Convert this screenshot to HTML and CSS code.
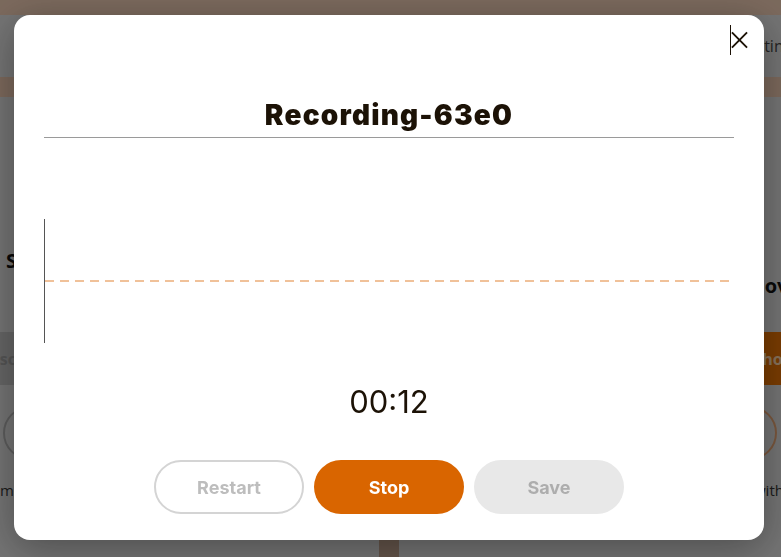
FILE: index.html
```html
<!DOCTYPE html>
<html lang="en">
<head>
    <meta charset="UTF-8">
    <meta name="viewport" content="width=device-width, initial-scale=1.0">
    <link rel="stylesheet" href="styles.css">
    <title>Recorder</title>
</head>
<body>
    <div class="topline"></div>
    <header class="header">
        <span class="logo">Recorder</span>
        <nav class="nav">Settings</nav>
    </header>
    <div class="tabbar"></div>

    <main class="columns">
        <section class="column column-left">
            <h3>Saved clips</h3>
            <button class="btn-muted">Discover</button>
            <div class="circle"></div>
            <p>manage your recordings</p>
        </section>
        <div class="divider"></div>
        <section class="column column-right">
            <h3>Remove noise</h3>
            <button class="btn-orange">Choose</button>
            <div class="circle circle-orange"></div>
            <p>with your microphone</p>
        </section>
    </main>

    <!-- 录音弹窗 -->
    <div class="overlay">
        <div class="modal">
            <button class="btn-close" aria-label="Close">
                <svg width="18" height="18" viewBox="0 0 18 18">
                    <path d="M1 1 L17 17 M17 1 L1 17" stroke="#1c1206" stroke-width="2" fill="none"/>
                </svg>
            </button>
            <h2 class="modal-title">Recording-63e0</h2>
            <div class="wave">
                <svg width="684" height="124" viewBox="0 0 684 124">
                    <line x1="0" y1="62" x2="684" y2="62" stroke="#f0c199" stroke-width="2" stroke-dasharray="9 6"/>
                </svg>
            </div>
            <div class="timer">00:12</div>
            <div class="actions">
                <button class="btn btn-restart">Restart</button>
                <button class="btn btn-stop">Stop</button>
                <button class="btn btn-save">Save</button>
            </div>
        </div>
    </div>
</body>
</html>
```

FILE: styles.css
```css
body {
    margin: 0;
    background-color: #d6d6d6;
    font-family: "Open Sans", "Liberation Sans", sans-serif;
    color: #222;
    height: 557px;
    overflow: hidden;
}
.topline {
    height: 15px;
    background-color: #e4c3ac;
}
.header {
    height: 62px;
    display: flex;
    align-items: center;
    justify-content: space-between;
    padding: 0 0 0 30px;
    font-size: 16px;
    color: #333;
}
.nav {
    margin-right: -19px;
    color: #444;
}
.tabbar {
    height: 20px;
    background-color: #e4c1a9;
}
.columns {
    display: grid;
    grid-template-columns: 379px 20px 1fr;
    height: 460px;
}
.divider {
    background-color: #b99c89;
}
.column {
    display: flex;
    flex-direction: column;
    align-items: flex-start;
    padding-top: 150px;
    white-space: nowrap;
}
.column h3 {
    margin: 0 0 58px;
    font-size: 20px;
    font-weight: 700;
    color: #111;
}
.column p {
    margin: 20px 0 0;
    font-size: 15px;
    color: #333;
}
.btn-muted, .btn-orange {
    height: 53px;
    border: none;
    width: 200px;
    padding: 0 0 0 4px;
    text-align: left;
    font-family: inherit;
    font-size: 16px;
    font-weight: 700;
}
.btn-muted {
    background-color: #bababa;
    color: #9c9c9c;
}
.btn-orange {
    background-color: #e06f04;
    color: #f7d2a8;
}
.circle {
    width: 50px;
    height: 50px;
    border-radius: 50%;
    border: 2px solid #aaa;
    margin-top: 21px;
}
.circle-orange {
    border-color: #e0a070;
}

/* 左右两栏只露出边缘 */
.column-left h3 { margin-left: 6px; }
.column-left .btn-muted { margin-left: -21px; }
.column-left .circle { margin-left: 3px; }
.column-left p { margin-left: 0; }
.column-right h3 { margin: 25px 0 33px 321px; }
.column-right .btn-orange { margin-left: 349px; }
.column-right .circle { margin-left: 324px; }
.column-right p { margin-left: 355px; }

/* 遮罩层 */
.overlay {
    position: fixed;
    inset: 0;
    background-color: rgba(0, 0, 0, 0.46);
    display: flex;
    align-items: flex-start;
    padding: 15px 0 0 14px;
}
.modal {
    position: relative;
    width: 750px;
    height: 525px;
    box-sizing: border-box;
    padding: 0 30px;
    background-color: #fff;
    border-radius: 16px;
    box-shadow: 0 8px 40px rgba(0, 0, 0, 0.35);
    font-family: Inter, "Noto Sans", sans-serif;
    color: #1c1206;
    display: flex;
    flex-direction: column;
}
.btn-close {
    position: absolute;
    top: 10px;
    right: 14px;
    width: 20px;
    height: 30px;
    padding: 0 2px 0 0;
    border: none;
    border-left: 1px solid #1c1206;
    background: none;
    display: flex;
    align-items: center;
    justify-content: center;
}
.modal-title {
    margin: 84px 0 0;
    padding-bottom: 5px;
    font-size: 28px;
    line-height: 33px;
    font-weight: 900;
    letter-spacing: 1.2px;
    text-align: center;
    border-bottom: 1px solid #9a9a9a;
}
.wave {
    margin-top: 81px;
    height: 124px;
    border-left: 1px solid #555;
    display: flex;
}
.wave svg {
    display: block;
}
.timer {
    margin-top: 40px;
    font-size: 31px;
    line-height: 37px;
    text-align: center;
}
.actions {
    margin-top: 40px;
    display: flex;
    justify-content: center;
    gap: 10px;
}
.btn {
    width: 150px;
    height: 54px;
    border-radius: 27px;
    font-family: Inter, "Noto Sans", sans-serif;
    font-size: 18px;
    font-weight: 700;
    border: none;
}
.btn-restart {
    background-color: #fff;
    border: 2px solid #d4d4d4;
    color: #bdbdbd;
}
.btn-stop {
    background-color: #d96500;
    color: #fff;
}
.btn-save {
    background-color: #e8e8e8;
    color: #adadad;
}
```
